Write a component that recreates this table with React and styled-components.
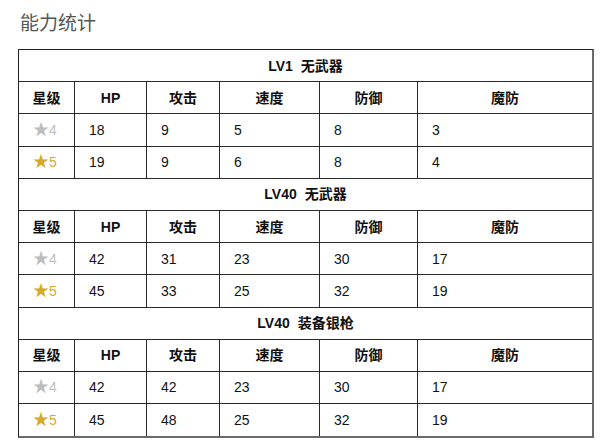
import React from 'react';
import styled, { createGlobalStyle } from 'styled-components';

const GlobalStyle = createGlobalStyle`
  body {
    margin: 0;
    background: #fff;
    font-family: "Liberation Sans", "Noto Sans CJK SC", sans-serif;
  }
`;

const Page = styled.div`
  padding: 9px 7px 0 18px;
  width: 576px;
`;

const Heading = styled.h2`
  margin: 0 0 14px 2px;
  font-family: "Noto Sans CJK SC", sans-serif;
  font-weight: 400;
  font-size: 19px;
  line-height: 26px;
  color: #555;
`;

const Table = styled.table`
  width: 576px;
  border-collapse: separate;
  border-spacing: 0;
  border-top: 1px solid #222;
  border-left: 1px solid #222;
  border-right: 2px solid #6a6a6a;
  border-bottom: 2px solid #6a6a6a;
  table-layout: fixed;
  font-size: 14px;
  color: #111;
`;

const Cell = styled.td`
  height: 32.2px;
  padding: 0 0 0 14px;
  border-right: 1px solid #2a2a2a;
  border-bottom: 1px solid #2a2a2a;
  box-sizing: border-box;
  line-height: 16px;
  font-family: "Liberation Sans", "Noto Sans CJK SC", sans-serif;
  &:last-child {
    border-right: none;
  }
  tr:last-child > & {
    border-bottom: none;
  }
`;

const HeadCell = styled(Cell)`
  padding: 0;
  text-align: center;
  font-weight: 700;
`;

const TitleCell = styled(HeadCell)`
  word-spacing: 4px;
`;

const Star = styled(Cell)`
  color: ${(p) => (p.$gold ? '#d7a928' : '#bdbdbd')};
  span {
    font-size: 16px;
    line-height: 16px;
  }
`;

const widths = [56, 72, 73, 100, 98];
const headers = ['星级', 'HP', '攻击', '速度', '防御', '魔防'];

const sections = [
  { title: 'LV1 无武器', rows: [[18, 9, 5, 8, 3], [19, 9, 6, 8, 4]] },
  { title: 'LV40 无武器', rows: [[42, 31, 23, 30, 17], [45, 33, 25, 32, 19]] },
  { title: 'LV40 装备银枪', rows: [[42, 42, 23, 30, 17], [45, 48, 25, 32, 19]] },
];

export default function App() {
  return (
    <>
      <GlobalStyle />
      <Page>
        <Heading>能力统计</Heading>
        <Table>
          <colgroup>
            {widths.map((w, i) => (
              <col key={i} style={{ width: w }} />
            ))}
            <col />
          </colgroup>
          <tbody>
            {sections.map((s) => (
              <React.Fragment key={s.title}>
                <tr>
                  <TitleCell colSpan={6}>{s.title}</TitleCell>
                </tr>
                <tr>
                  {headers.map((h) => (
                    <HeadCell key={h}>{h}</HeadCell>
                  ))}
                </tr>
                {s.rows.map((r, i) => (
                  <tr key={i}>
                    <Star $gold={i === 1}>
                      <span>★</span>
                      {i === 0 ? 4 : 5}
                    </Star>
                    {r.map((v, j) => (
                      <Cell key={j}>{v}</Cell>
                    ))}
                  </tr>
                ))}
              </React.Fragment>
            ))}
          </tbody>
        </Table>
      </Page>
    </>
  );
}
